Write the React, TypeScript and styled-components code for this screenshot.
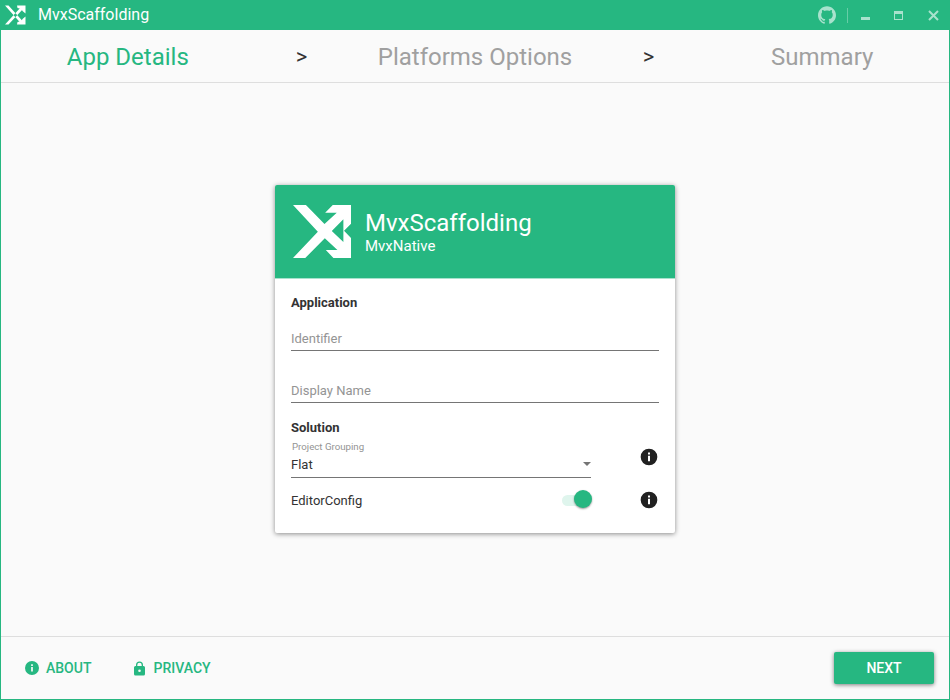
import React from "react";
import styled, { createGlobalStyle } from "styled-components";

const GREEN = "#26b781";

const GlobalStyle = createGlobalStyle`
  * { box-sizing: border-box; }
  body { margin: 0; font-family: Roboto, sans-serif; color: #333; }
`;

const Window = styled.div`
  width: 950px;
  height: 700px;
  display: flex;
  flex-direction: column;
  background: #fafafa;
  border: 1px solid ${GREEN};
  border-top: 0;
  overflow: hidden;
`;

const TitleBar = styled.header`
  height: 30px;
  flex: none;
  margin: 0 -1px;
  padding: 0 11.5px 0 5px;
  display: flex;
  align-items: center;
  background: ${GREEN};
  color: #fff;
`;

const WindowTitle = styled.span`
  flex: 1;
  margin-left: 12px;
  font-size: 16px;
  line-height: 30px;
`;

const GithubIcon = styled.svg`
  width: 18px;
  height: 18px;
  fill: #a8e2cd;
`;

const Divider = styled.span`
  width: 1px;
  height: 15px;
  margin: 1px 12px 0 11px;
  background: #67cda7;
`;

const WindowIcon = styled.svg<{ $gap?: number }>`
  width: 11px;
  height: 11px;
  margin-left: ${(p) => p.$gap ?? 0}px;
  color: #a8e2cd;
`;

const Steps = styled.nav`
  height: 53px;
  flex: none;
  display: grid;
  grid-template-columns: 253.6px 93.6px 253.6px 93.6px 253.6px;
  align-items: start;
  text-align: center;
  border-bottom: 1px solid #dedede;
`;

const Step = styled.span<{ $active?: boolean }>`
  font-size: 24px;
  line-height: 54px;
  height: 52px;
  color: ${(p) => (p.$active ? GREEN : "#a0a0a0")};
`;

const Chevron = styled.span`
  font-size: 22px;
  line-height: 54px;
  height: 52px;
  color: #333;
`;

const Main = styled.main`
  flex: 1;
  padding-top: 102px;
  display: flex;
  justify-content: center;
  align-items: flex-start;
`;

const Card = styled.section`
  width: 400px;
  height: 348px;
  background: #fff;
  border-radius: 2px;
  overflow: hidden;
  box-shadow: 0 1px 5px rgba(0, 0, 0, 0.45);
`;

const CardHeader = styled.div`
  height: 94px;
  padding: 20px 18px 0;
  display: flex;
  background: ${GREEN};
  border-bottom: 1px solid #a8e2cd;
  color: #fff;
`;

const CardTitles = styled.div`
  margin: 4px 0 0 14px;
`;

const CardTitle = styled.div`
  font-size: 24px;
  line-height: 28px;
`;

const CardSubtitle = styled.div`
  font-size: 15px;
  line-height: 18px;
`;

const CardBody = styled.div`
  padding: 15px 16px 0;
  font-size: 13px;
`;

const Heading = styled.h2`
  margin: 0;
  font-size: 13px;
  line-height: 18px;
  font-weight: 700;
`;

const TextField = styled.div<{ $top: number }>`
  height: 26px;
  margin-top: ${(p) => p.$top}px;
  padding-top: 5px;
  line-height: 18px;
  color: #949494;
  border-bottom: 1px solid #757575;
`;

const Solution = styled.div`
  margin-top: 16px;
`;

const OptionRow = styled.div`
  display: flex;
  justify-content: space-between;
`;

const Select = styled.div`
  width: 300px;
  height: 41px;
  padding-top: 3px;
  border-bottom: 1px solid #757575;
`;

const SelectLabel = styled.div`
  padding-left: 1px;
  font-size: 9.7px;
  line-height: 14px;
  color: #949494;
`;

const SelectValue = styled.div`
  display: flex;
  align-items: center;
  justify-content: space-between;
  line-height: 21px;
`;

const Caret = styled.svg`
  width: 8px;
  height: 4px;
  margin-bottom: 1px;
  fill: #757575;
`;

const InfoIcon = styled.svg<{ $size: number; $top?: number }>`
  width: ${(p) => p.$size}px;
  height: ${(p) => p.$size}px;
  flex: none;
  margin-top: ${(p) => p.$top ?? 0}px;
  fill: currentColor;
`;

const DarkInfo = styled(InfoIcon)`
  color: #212121;
`;

const ToggleLabel = styled.span`
  flex: 1;
  line-height: 20px;
  padding-top: 13px;
`;

const Track = styled.div`
  width: 27px;
  height: 11px;
  margin: 17px 50px 0 0;
  border-radius: 6px;
  background: #dff5ed;
  display: flex;
  align-items: center;
  justify-content: flex-end;
`;

const Thumb = styled.span`
  width: 18px;
  height: 18px;
  flex: none;
  margin: 0 -3px 3px 0;
  border-radius: 50%;
  background: ${GREEN};
  box-shadow: 0 1px 2px rgba(0, 0, 0, 0.4);
`;

const Footer = styled.footer`
  height: 63px;
  flex: none;
  padding: 0 15px 0 24px;
  display: flex;
  align-items: center;
  border-top: 1px solid #dedede;
`;

const FooterLink = styled.a<{ $gap?: number }>`
  display: flex;
  align-items: center;
  gap: 7px;
  margin-left: ${(p) => p.$gap ?? 0}px;
  font-size: 14px;
  font-weight: 500;
  line-height: 20px;
  color: ${GREEN};
`;

const LockIcon = styled.svg`
  width: 13px;
  height: 15px;
  fill: currentColor;
`;

const NextButton = styled.button`
  width: 100px;
  height: 32px;
  margin-left: auto;
  padding: 0;
  border: 0;
  border-radius: 2px;
  background: ${GREEN};
  color: #fff;
  font: 500 14px Roboto, sans-serif;
  box-shadow: 0 1px 4px rgba(0, 0, 0, 0.5);
`;

const LogoSvg = styled.svg<{ $w: number; $h: number }>`
  width: ${(p) => p.$w}px;
  height: ${(p) => p.$h}px;
  flex: none;
  fill: #fff;
`;

const Logo = () => (
  <LogoSvg $w={58} $h={53} viewBox="0 0 175 159" preserveAspectRatio="none">
    <path
      fillRule="evenodd"
      d="M0 0H39L95 57 132 23H97L120 0H175V56L154 77 175 99V159H122L99 135H134L96 100 37 159H0L75 80ZM117 78 152 111V43Z"
    />
  </LogoSvg>
);

const SmallLogo = () => (
  <LogoSvg $w={21} $h={20} viewBox="0 0 21 20">
    <path d="M0 .5H3.500L18 16.500 16 18.500ZM0 19.500H3.500L18 4 16 2Z" />
    <path d="M12 .5H20.500V8.500L17.500 6 16.500 4 12.500 3ZM12 19.500H20.500V11.500L17.500 14 16.500 16 12.500 17Z" />
  </LogoSvg>
);

const INFO_PATH =
  "M12 2a10 10 0 1 0 0 20 10 10 0 0 0 0-20zm1.2 15h-2.4v-6.4h2.4zm0-8h-2.4V6.6h2.4z";

export default function App() {
  return (
    <>
      <GlobalStyle />
      <Window>
        <TitleBar>
          <SmallLogo />
          <WindowTitle>MvxScaffolding</WindowTitle>
          <GithubIcon viewBox="0 0 24 24">
            <path d="M12 .297c-6.63 0-12 5.373-12 12 0 5.303 3.438 9.8 8.205 11.385.6.113.82-.258.82-.577 0-.285-.01-1.04-.015-2.04-3.338.724-4.042-1.61-4.042-1.61C4.422 18.07 3.633 17.7 3.633 17.7c-1.087-.744.084-.729.084-.729 1.205.084 1.838 1.236 1.838 1.236 1.07 1.835 2.809 1.305 3.495.998.108-.776.417-1.305.76-1.605-2.665-.3-5.466-1.332-5.466-5.93 0-1.31.465-2.38 1.235-3.22-.135-.303-.54-1.523.105-3.176 0 0 1.005-.322 3.3 1.23.96-.267 1.98-.399 3-.405 1.02.006 2.04.138 3 .405 2.28-1.552 3.285-1.23 3.285-1.23.645 1.653.24 2.873.12 3.176.765.84 1.23 1.91 1.23 3.22 0 4.61-2.805 5.625-5.475 5.92.42.36.81 1.096.81 2.22 0 1.606-.015 2.896-.015 3.286 0 .315.21.69.825.57C20.565 22.092 24 17.592 24 12.297c0-6.627-5.373-12-12-12" />
          </GithubIcon>
          <Divider />
          <WindowIcon viewBox="0 0 11 11">
            <path d="M1 7h9v3H1z" fill="currentColor" />
          </WindowIcon>
          <WindowIcon $gap={22} viewBox="0 0 11 11">
            <path d="M1 1h9v9H1zM2 4v5h7V4z" fillRule="evenodd" fill="currentColor" />
          </WindowIcon>
          <WindowIcon $gap={23.5} viewBox="0 0 11 11">
            <path d="M1 1l9 9M10 1l-9 9" stroke="currentColor" strokeWidth="2" />
          </WindowIcon>
        </TitleBar>
        <Steps>
          <Step $active>App Details</Step>
          <Chevron>&gt;</Chevron>
          <Step>Platforms Options</Step>
          <Chevron>&gt;</Chevron>
          <Step>Summary</Step>
        </Steps>
        <Main>
          <Card>
            <CardHeader>
              <Logo />
              <CardTitles>
                <CardTitle>MvxScaffolding</CardTitle>
                <CardSubtitle>MvxNative</CardSubtitle>
              </CardTitles>
            </CardHeader>
            <CardBody>
              <Heading>Application</Heading>
              <TextField $top={13}>Identifier</TextField>
              <TextField $top={26}>Display Name</TextField>
              <Solution>
                <Heading>Solution</Heading>
              </Solution>
              <OptionRow>
                <Select>
                  <SelectLabel>Project Grouping</SelectLabel>
                  <SelectValue>
                    Flat
                    <Caret viewBox="0 0 8 4">
                      <path d="M0 0h8L4 4z" />
                    </Caret>
                  </SelectValue>
                </Select>
                <DarkInfo $size={20} $top={10} viewBox="0 0 24 24">
                  <path d={INFO_PATH} />
                </DarkInfo>
              </OptionRow>
              <OptionRow>
                <ToggleLabel>EditorConfig</ToggleLabel>
                <Track>
                  <Thumb />
                </Track>
                <DarkInfo $size={20} $top={12} viewBox="0 0 24 24">
                  <path d={INFO_PATH} />
                </DarkInfo>
              </OptionRow>
            </CardBody>
          </Card>
        </Main>
        <Footer>
          <FooterLink>
            <InfoIcon $size={14} viewBox="2 2 20 20">
              <path d={INFO_PATH} />
            </InfoIcon>
            ABOUT
          </FooterLink>
          <FooterLink $gap={42}>
            <LockIcon viewBox="0 0 13 15">
              <path
                fillRule="evenodd"
                d="M3 5V4a3.5 3.5 0 0 1 7 0v1h.5A1.5 1.5 0 0 1 12 6.500V13a1.500 1.500 0 0 1-1.500 1.500h-8A1.500 1.500 0 0 1 1 13V6.500A1.500 1.500 0 0 1 2.500 5zM4.300 5h4.400V4a2.200 2.200 0 0 0-4.400 0zM6.500 8.500a1.300 1.300 0 1 0 0 2.600 1.300 1.300 0 0 0 0-2.600z"
              />
            </LockIcon>
            PRIVACY
          </FooterLink>
          <NextButton>NEXT</NextButton>
        </Footer>
      </Window>
    </>
  );
}
